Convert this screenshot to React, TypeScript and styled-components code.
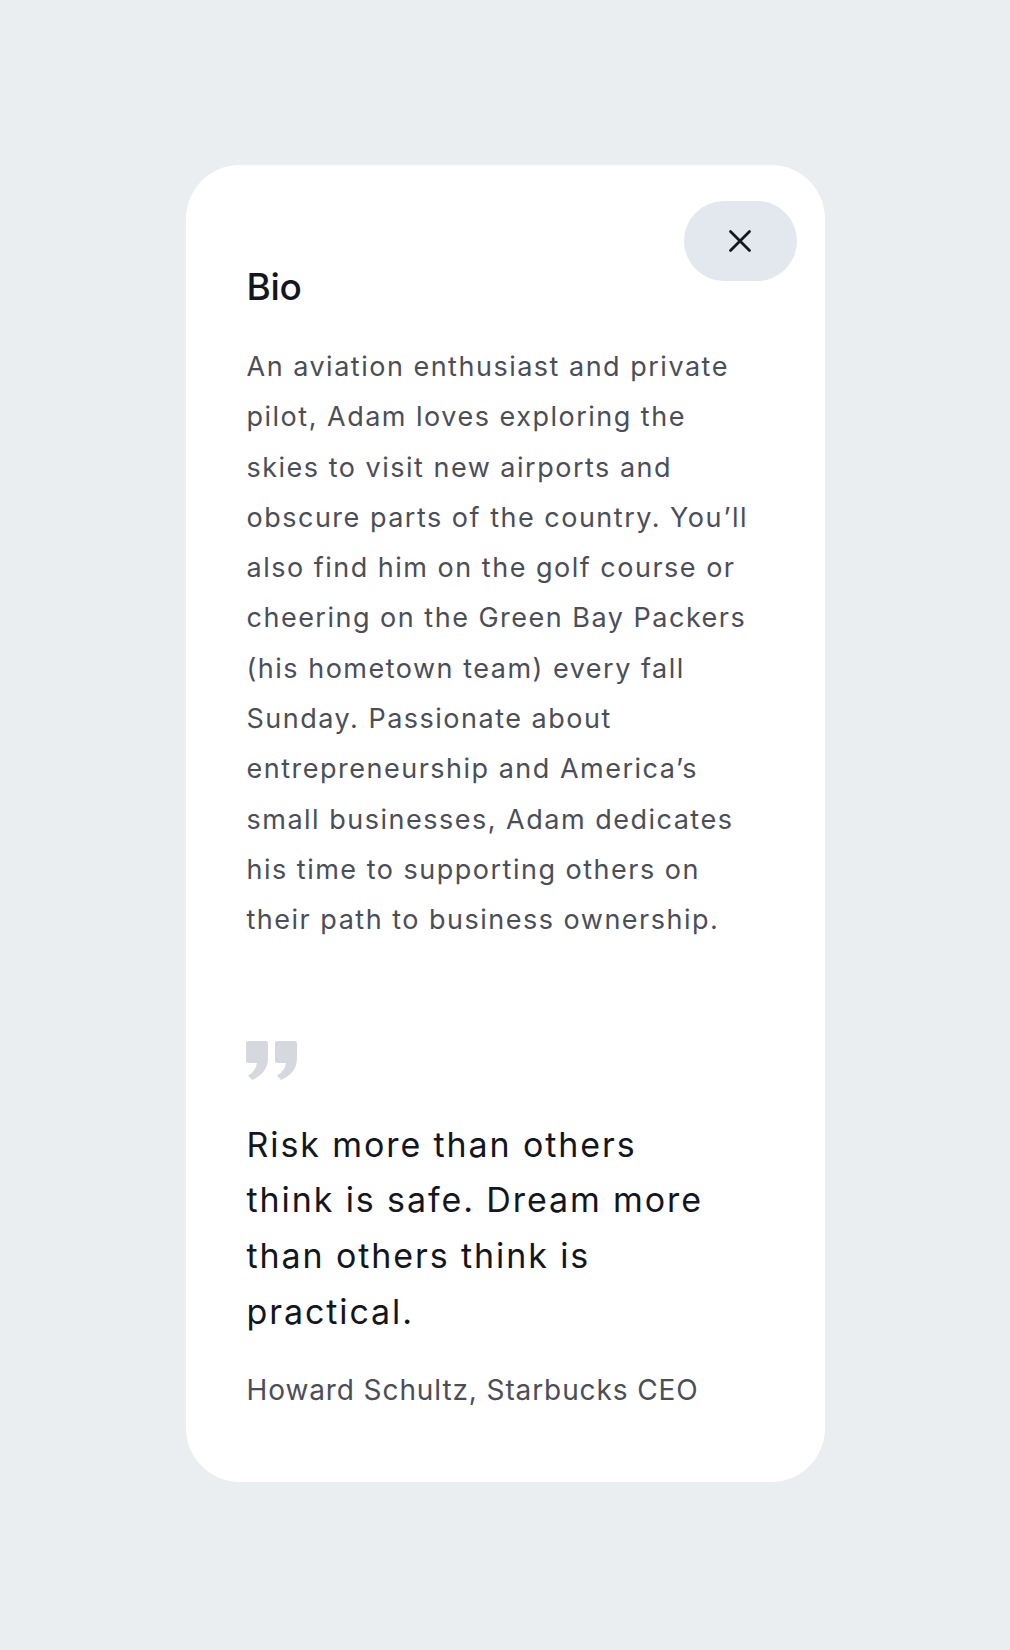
import styled, { createGlobalStyle } from "styled-components";

const GlobalStyle = createGlobalStyle`
  html, body {
    margin: 0;
    padding: 0;
    background: #eaeef1;
  }
  body {
    font-family: Inter, "Noto Sans", sans-serif;
    -webkit-font-smoothing: antialiased;
  }
`;

// lines kept as in the design
const bioLines = [
  "An aviation enthusiast and private",
  "pilot, Adam loves exploring the",
  "skies to visit new airports and",
  "obscure parts of the country. You’ll",
  "also find him on the golf course or",
  "cheering on the Green Bay Packers",
  "(his hometown team) every fall",
  "Sunday. Passionate about",
  "entrepreneurship and America’s",
  "small businesses, Adam dedicates",
  "his time to supporting others on",
  "their path to business ownership.",
];

const quoteLines = [
  "Risk more than others",
  "think is safe. Dream more",
  "than others think is",
  "practical.",
];

function withBreaks(lines: string[]) {
  return lines.map((line, i) => (
    <span key={i}>
      {line}
      {i < lines.length - 1 && <br />}
    </span>
  ));
}

export default function App() {
  return (
    <Page>
      <GlobalStyle />
      <Card>
        <CloseButton type="button" aria-label="Close">
          <svg width="26" height="26" viewBox="0 0 26 26" fill="none">
            <path
              d="M3.5 3.5L22.5 22.5M22.5 3.5L3.5 22.5"
              stroke="#15171d"
              strokeWidth="2.8"
              strokeLinecap="round"
            />
          </svg>
        </CloseButton>
        <Title>Bio</Title>
        <BioText>{withBreaks(bioLines)}</BioText>
        <QuoteMark viewBox="0 0 51 39" aria-hidden="true">
          <path d="M2 0H19.5Q22 0 22 3V17Q22 32 6 39L2 34.5Q10 30 11 22H2Q0 22 0 20V2Q0 0 2 0Z" />
          <path d="M31 0H48.5Q51 0 51 3V17Q51 32 35 39L31 34.5Q39 30 40 22H31Q29 22 29 20V2Q29 0 31 0Z" />
        </QuoteMark>
        <Quote>{withBreaks(quoteLines)}</Quote>
        <Author>Howard Schultz, Starbucks CEO</Author>
      </Card>
    </Page>
  );
}

const Page = styled.div`
  min-height: 1650px;
  box-sizing: border-box;
  padding: 165px 0 169px;
  display: flex;
  justify-content: center;
  align-items: flex-start;
`;

const Card = styled.div`
  position: relative;
  width: 639px;
  box-sizing: border-box;
  padding: 100px 40px 74px 61px;
  background: #ffffff;
  border-radius: 54px;
  display: flex;
  flex-direction: column;
`;

const CloseButton = styled.button`
  position: absolute;
  top: 36px;
  right: 28px;
  width: 113px;
  height: 80px;
  border: none;
  border-radius: 40px;
  background: #e2e8ee;
  display: flex;
  align-items: center;
  justify-content: center;
  padding: 0;
  cursor: pointer;
`;

const Title = styled.h2`
  margin: 0;
  font-size: 37px;
  line-height: 44px;
  font-weight: 500;
  color: #14161e;
  letter-spacing: -0.3px;
`;

const BioText = styled.p`
  margin: 33px 0 0;
  font-size: 27px;
  line-height: 50.3px;
  letter-spacing: 1.5px;
  color: #4b4e57;
  font-weight: 400;
  white-space: nowrap;
`;

const QuoteMark = styled.svg`
  width: 51px;
  height: 39px;
  margin-top: 95px;
  margin-left: -1px;
  fill: #d6d8df;
`;

const Quote = styled.p`
  margin: 37px 0 0;
  font-size: 34px;
  line-height: 55.8px;
  letter-spacing: 1.9px;
  color: #14161e;
  font-weight: 400;
  white-space: nowrap;
`;

const Author = styled.p`
  margin: 33px 0 0;
  font-size: 28px;
  line-height: 35px;
  letter-spacing: 0.9px;
  color: #4b4e57;
`;
